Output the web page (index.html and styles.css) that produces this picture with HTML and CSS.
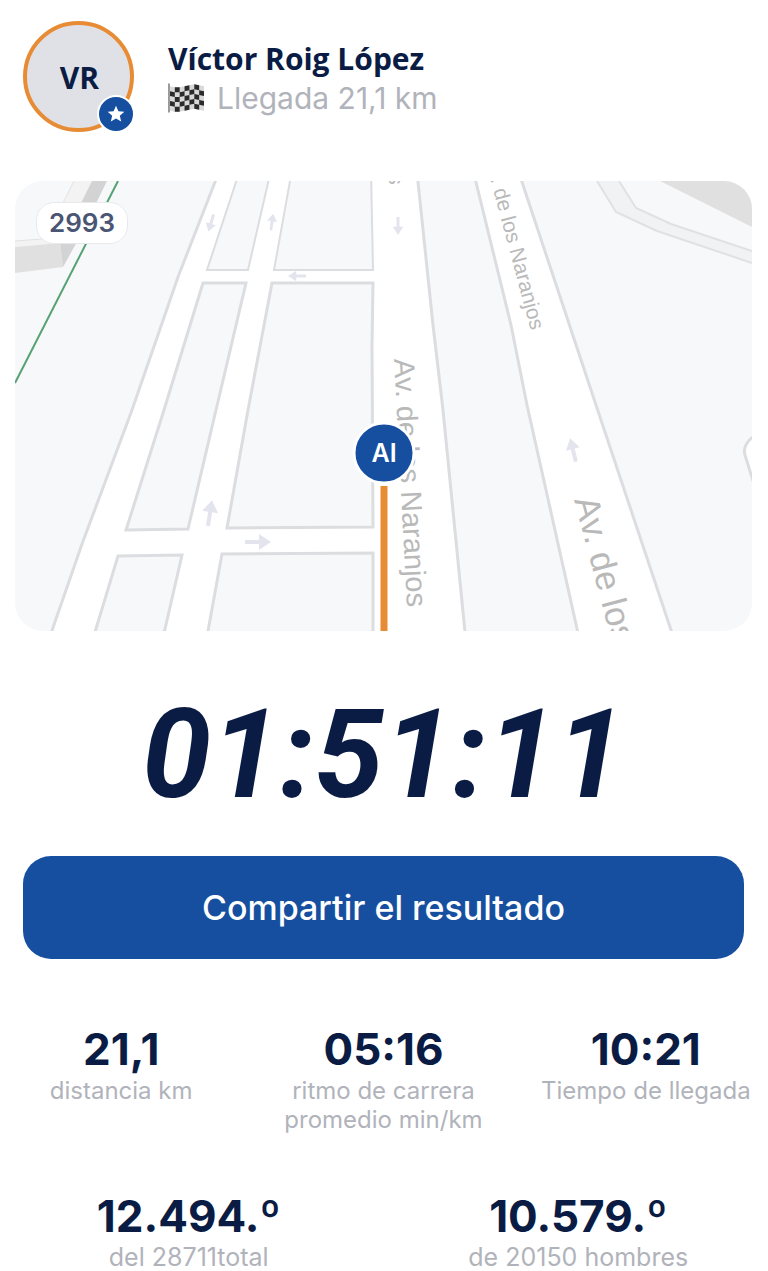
FILE: index.html
```html
<!DOCTYPE html>
<html lang="es">
<head>
  <meta charset="UTF-8" />
  <meta name="viewport" content="width=device-width, initial-scale=1.0"/>
  <title>Llegada 21,1 km</title>
  <link rel="stylesheet" href="styles.css">
</head>
<body>
  <main class="page">
    <header class="runner">
      <div class="avatar">
        VR
        <span class="avatar-badge">
          <svg viewBox="0 0 24 24"><path d="M12 2l2.900 6.600 7.100.7-5.400 4.700 1.600 7L12 17.300 5.800 21l1.600-7L2 9.300l7.100-.7z"/></svg>
        </span>
      </div>
      <div class="runner-info">
        <h1>Víctor Roig López</h1>
        <p class="status">
          <svg class="flag" viewBox="0 0 38 30">
            <path class="flag-cloth" d="M2 3L7 4H12L27 1L37 3V28L27 26L12 29H7L2 28z"/>
            <path class="flag-squares" d="M2 8l5 1v5l-5-1zM2 18l5 1v5l-5-1zM7 4h5v5h-5zM7 14h5v5h-5zM7 24h5v5h-5zM12 9l5-1v5l-5 1zM12 19l5-1v5l-5 1zM17 3l5-1v5l-5 1zM17 13l5-1v5l-5 1zM17 23l5-1v5l-5 1zM22 7l5-1v5l-5 1zM22 17l5-1v5l-5 1zM27 1l5 1v5l-5-1zM27 11l5 1v5l-5-1zM27 21l5 1v5l-5-1zM32 7l5 1v5l-5-1zM32 17l5 1v5l-5-1z"/>
            <path class="flag-pole" d="M1 0v30"/>
          </svg>
          Llegada 21,1 km
        </p>
      </div>
    </header>

    <section class="map">
      <svg class="map-canvas" viewBox="15 181 737 450" role="img" aria-label="Mapa de la llegada">
        <!-- manzanas -->
        <g class="land">
          <path d="M0 170H219L215 182 178 277 132 410 82 544 48 642H0z"/>
          <path class="far" d="M240 170L207 270H248L271 170z"/>
          <path class="far" d="M292 170L274 270H373L371 170z"/>
          <path d="M203 283H246L216 410 188 529 126 530 164 410z"/>
          <path d="M272 283H373L372 345 373 527 227 528 248 410z"/>
          <path d="M118 556L182 555 162 642H92z"/>
          <path d="M222 554L373 553V642H206z"/>
          <path d="M417 170L418 182 433 325 443 410 466 642H580L527 405 511 325 473 170z"/>
          <path d="M518 170L522 182 596 405 675 642H770V170z"/>
        </g>

        <!-- edificios -->
        <path class="roof" d="M74 181H92L75 215 60 243 15 247V241L42 239 58 213z"/>
        <path class="roof-line" d="M74 181L58 213M15 241L42 239"/>
        <path class="wall" d="M15 247L60 243 63 267 15 273z"/>
        <path class="wall-dark" d="M92 181H107L78 240 63 267 60 243 75 215z"/>
        <path class="wall" d="M660 181H752V227z"/>

        <!-- caminos -->
        <path class="path-fill" d="M597 181L616 212 657 231 752 263V251L671 224 636 208 619 181z"/>
        <path class="path-line" d="M597 181L616 212 657 231 752 263M752 251L671 224 636 208 619 181"/>
        <path class="path-curve" d="M754 436Q742 445 745 455L754 484"/>
        <path class="rail" d="M118 181L15 383"/>

        <!-- sentido de las calles -->
        <g class="arrows">
          <path transform="translate(211 223) rotate(197) scale(.75)" d="M-2 12V-1H-7L0-12 7-1H2V12z"/>
          <path transform="translate(272 222) rotate(8) scale(.7)" d="M-2 12V-1H-7L0-12 7-1H2V12z"/>
          <path transform="translate(297 276) rotate(-90) scale(.75)" d="M-2 12V-1H-7L0-12 7-1H2V12z"/>
          <path transform="translate(398 226) rotate(180) scale(.75)" d="M-2 12V-1H-7L0-12 7-1H2V12z"/>
          <path transform="translate(210 513) rotate(9)" d="M-2 13V-1H-8L0-13 8-1H2V13z"/>
          <path transform="translate(258 542) rotate(90)" d="M-2 13V-1H-8L0-13 8-1H2V13z"/>
          <path transform="translate(573 450) rotate(-14)" d="M-2 12V-1H-7L0-12 7-1H2V12z"/>
        </g>

        <g class="street">
          <text class="street-md" transform="translate(394 359) rotate(87)">Av. de los Naranjos</text>
          <text class="street-sm" transform="translate(531 331) rotate(75)" text-anchor="end">Av. de los Naranjos</text>
          <text class="street-lg" transform="translate(574 500) rotate(75)">Av. de los Naranjos</text>
          <text class="street-sm" transform="translate(389 185) rotate(88)" text-anchor="end">Av. de los Naranjos</text>
        </g>

        <path class="route" d="M384 486V640"/>
        <circle class="marker" cx="384" cy="453" r="30"/>
        <text class="marker-text" x="384" y="462">AI</text>
      </svg>
      <span class="bib">2993</span>
    </section>

    <p class="time">01:51:11</p>

    <button class="share" type="button">Compartir el resultado</button>

    <section class="stats">
      <div class="stat">
        <strong>21,1</strong>
        <span>distancia km</span>
      </div>
      <div class="stat">
        <strong>05:16</strong>
        <span>ritmo de carrera<br>promedio min/km</span>
      </div>
      <div class="stat">
        <strong>10:21</strong>
        <span>Tiempo de llegada</span>
      </div>
    </section>

    <section class="stats ranking">
      <div class="stat">
        <strong>12.494.º</strong>
        <span>del 28711total</span>
      </div>
      <div class="stat">
        <strong>10.579.º</strong>
        <span>de 20150 hombres</span>
      </div>
    </section>
  </main>
</body>
</html>
```
FILE: styles.css
```css
* {
  box-sizing: border-box;
}
body {
  margin: 0;
  background: #fff;
  color: #0a1c44;
  font-family: Inter, "Liberation Sans", sans-serif;
}
h1, p {
  margin: 0;
}
.page {
  padding: 21px 16px 0 15px;
}

/* cabecera */
.runner {
  display: flex;
  align-items: center;
  gap: 34px;
  padding: 0 8px;
}
.avatar {
  position: relative;
  display: flex;
  align-items: center;
  justify-content: center;
  flex-shrink: 0;
  width: 111px;
  height: 111px;
  padding: 2px 0 0 2px;
  border: 4px solid #e78c35;
  border-radius: 50%;
  background: #e0e1e7;
  font: 700 30px "Open Sans", sans-serif;
}
.avatar-badge {
  position: absolute;
  right: -5px;
  bottom: -5px;
  display: flex;
  align-items: center;
  justify-content: center;
  width: 38px;
  height: 38px;
  border: 2px solid #fff;
  border-radius: 50%;
  background: #164f9f;
}
.avatar-badge svg {
  width: 20px;
  height: 20px;
  fill: #fff;
}
.runner-info {
  padding-top: 2px;
}
.runner-info h1 {
  font: 700 30px/40px "Open Sans", sans-serif;
}
.status {
  display: flex;
  align-items: center;
  gap: 12px;
  color: #b1b3bb;
  font-size: 30px;
  line-height: 38px;
}
.flag {
  width: 37px;
  height: 30px;
}
.flag-cloth {
  fill: #d9d9d9;
}
.flag-squares {
  fill: #2b2b2b;
}
.flag-pole {
  stroke: #999;
  stroke-width: 2;
}

/* mapa */
.map {
  position: relative;
  margin-top: 49px;
  border-radius: 28px;
  overflow: hidden;
}
.map-canvas {
  display: block;
  width: 100%;
  background: #fff;
}
.land {
  fill: #f7f8fa;
  stroke: #dcdde0;
  stroke-width: 3;
}
.land .far {
  stroke-width: 2;
}
.roof {
  fill: #f3f3f4;
}
.roof-line {
  stroke: #e2e2e2;
}
.wall {
  fill: #e0e0e0;
}
.wall-dark {
  fill: #d3d3d3;
}
.path-fill {
  fill: #f1f2f4;
}
.path-line {
  fill: none;
  stroke: #e0e1e3;
  stroke-width: 2;
}
.path-curve {
  fill: #fff;
  stroke: #dcdde0;
  stroke-width: 3;
}
.rail {
  stroke: #55a273;
  stroke-width: 2;
}
.arrows {
  fill: #e4e4ee;
}
.street {
  fill: #b9b9b9;
  font-family: "Liberation Sans", sans-serif;
}
.street-sm {
  font-size: 21px;
}
.street-md {
  font-size: 29px;
}
.street-lg {
  font-size: 35px;
}
.route {
  stroke: #e78c35;
  stroke-width: 7;
}
.marker {
  fill: #164f9f;
  stroke: #fff;
  stroke-width: 3;
}
.marker-text {
  fill: #fff;
  font-size: 25px;
  font-weight: 600;
  text-anchor: middle;
}
.bib {
  position: absolute;
  top: 21px;
  left: 21px;
  padding: 0 12px;
  border: 1px solid #e8e9ec;
  border-radius: 18px;
  background: #fff;
  color: #4a5573;
  font-size: 26px;
  font-weight: 600;
  line-height: 40px;
}

.time {
  margin-top: 54px;
  font: italic 700 124px/140px Roboto, sans-serif;
  text-align: center;
}

.share {
  display: block;
  width: calc(100% - 16px);
  height: 103px;
  margin: 31px 8px 0;
  border: none;
  border-radius: 28px;
  background: #164f9f;
  color: #fff;
  font: 500 34px Inter, sans-serif;
  cursor: pointer;
}

/* resultados */
.stats {
  display: grid;
  grid-template-columns: repeat(3, 1fr);
  gap: 50px;
  margin-top: 64px;
}
.stat {
  display: flex;
  flex-direction: column;
  align-items: center;
  text-align: center;
}
.stat strong {
  font-size: 44px;
  line-height: 53px;
}
.stat span {
  color: #b1b3bb;
  font-size: 24px;
  line-height: 29px;
  white-space: nowrap;
}
.ranking {
  grid-template-columns: 1fr 1fr;
  gap: 42px;
  margin-top: 56px;
}
.ranking .stat span {
  font-size: 25px;
}
```
